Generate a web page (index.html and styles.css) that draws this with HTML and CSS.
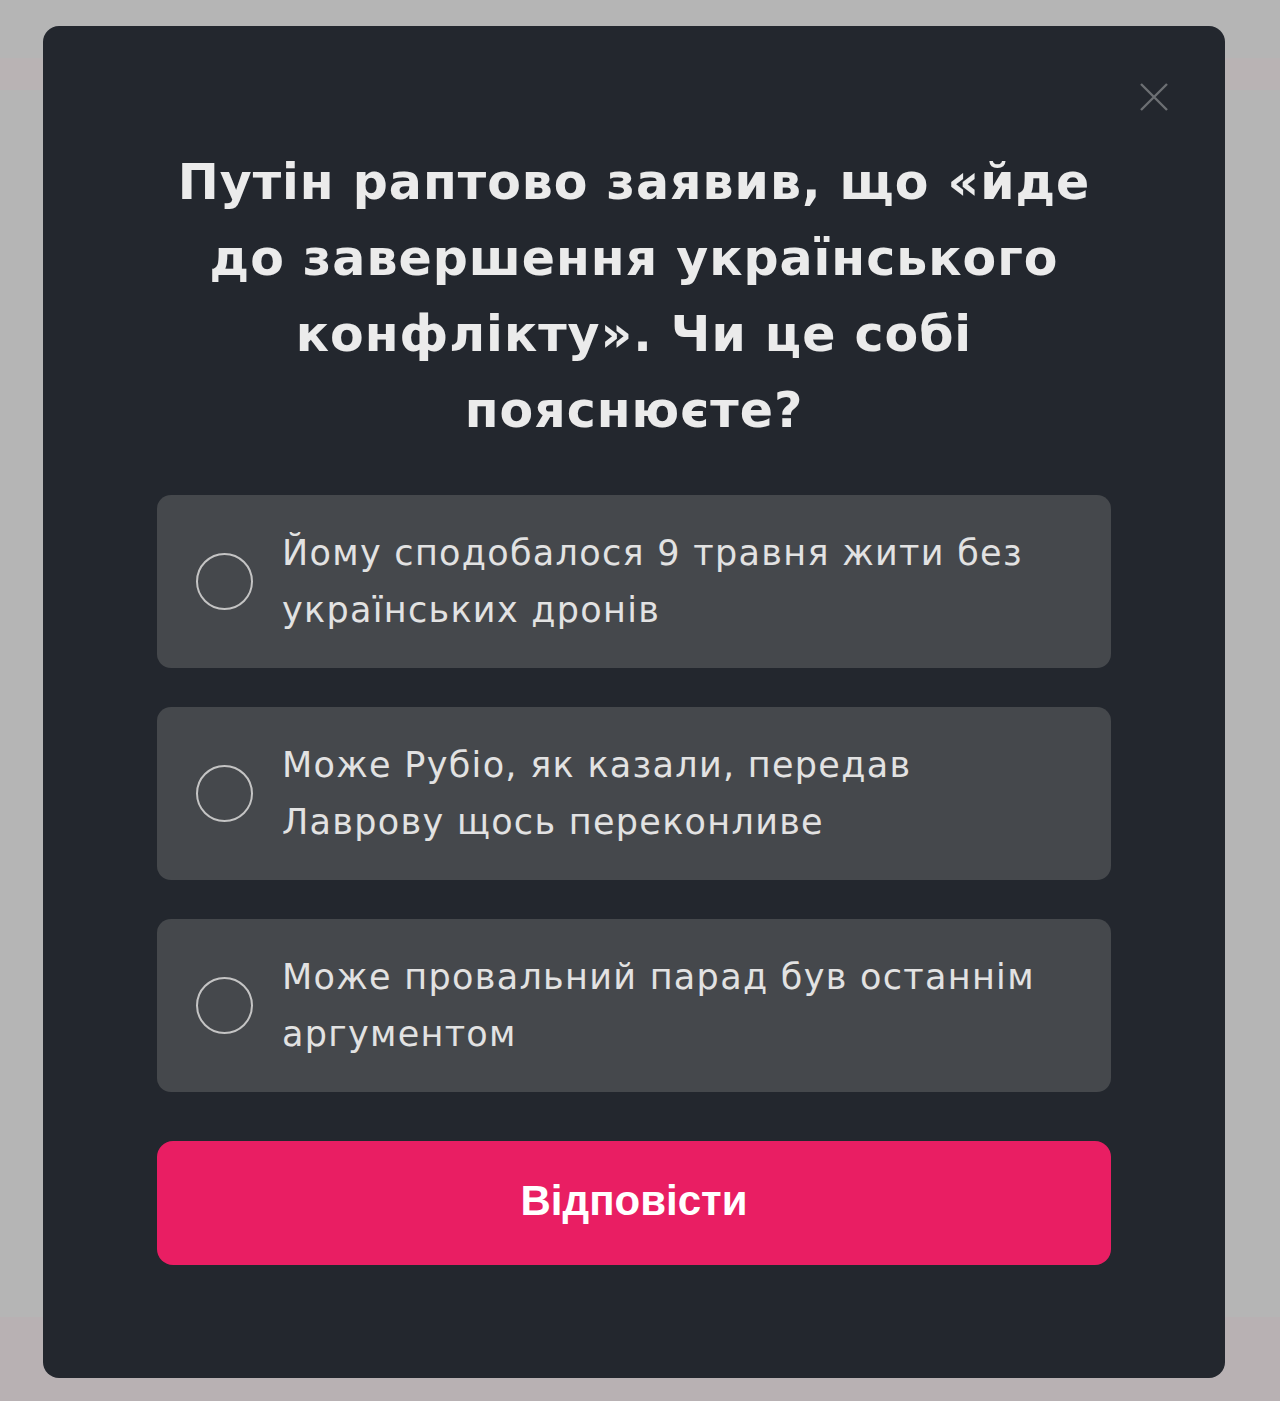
FILE: index.html
```html
<!DOCTYPE html>
<html lang="uk">
<head>
<meta charset="utf-8">
<link rel="stylesheet" href="styles.css">
</head>
<body>
<div class="backdrop">
  <div class="strip-top"></div>
  <div class="strip-bottom"></div>
  <div class="modal">
    <button class="close" aria-label="Закрити">
      <svg width="30" height="30" viewBox="0 0 30 30"><path d="M2 2 L28 28 M28 2 L2 28" stroke="#6c6f73" stroke-width="2.4" fill="none"/></svg>
    </button>
    <h2 class="title">Путін раптово заявив, що «йде до завершення українського конфлікту». Чи це собі пояснюєте?</h2>
    <div class="options">
      <label class="option"><span class="radio"></span><span class="text">Йому сподобалося 9 травня жити без українських дронів</span></label>
      <label class="option"><span class="radio"></span><span class="text">Може Рубіо, як казали, передав Лаврову щось переконливе</span></label>
      <label class="option"><span class="radio"></span><span class="text">Може провальний парад був останнім аргументом</span></label>
    </div>
    <button class="submit">Відповісти</button>
  </div>
</div>
</body>
</html>
```
FILE: styles.css
```css
html, body {
  margin: 0;
  padding: 0;
}
body {
  background: #b5b5b5;
  width: 1280px;
  height: 1401px;
  overflow: hidden;
}
.backdrop {
  position: relative;
  width: 1280px;
  height: 1401px;
  padding-top: 26px;
  box-sizing: border-box;
}
.strip-top {
  position: absolute;
  left: 0;
  right: 0;
  top: 58px;
  height: 32px;
  background: #b9b3b4;
}
.strip-bottom {
  position: absolute;
  left: 0;
  right: 0;
  top: 1317px;
  bottom: 0;
  background: #b8b1b3;
}
.modal {
  position: relative;
  margin-left: 43px;
  width: 1182px;
  height: 1352px;
  box-sizing: border-box;
  background: #23272e;
  border-radius: 16px;
  padding: 119px 114px 0;
  display: flex;
  flex-direction: column;
}
.close {
  position: absolute;
  top: 56px;
  right: 56px;
  width: 30px;
  height: 30px;
  padding: 0;
  border: 0;
  background: none;
}
.close svg { display: block; }
.title {
  margin: 0 auto;
  width: 930px;
  text-align: center;
  color: #ebebeb;
  font-family: "DejaVu Sans", sans-serif;
  font-weight: 700;
  font-size: 49px;
  line-height: 76px;
  letter-spacing: 1px;
}
.options {
  margin-top: 46px;
  display: flex;
  flex-direction: column;
  gap: 39px;
}
.option {
  display: flex;
  align-items: center;
  height: 173px;
  box-sizing: border-box;
  padding: 0 40px 0 39px;
  background: #45484c;
  border-radius: 14px;
}
.radio {
  flex: none;
  width: 57px;
  height: 57px;
  box-sizing: border-box;
  border: 2px solid #c4c4c4;
  border-radius: 50%;
  margin-right: 29px;
}
.text {
  color: #e2e2e2;
  font-family: "DejaVu Sans", sans-serif;
  font-size: 35px;
  line-height: 57px;
  letter-spacing: 1.3px;
}
.submit {
  margin-top: 49px;
  height: 124px;
  border: 0;
  border-radius: 16px;
  background: #e91e63;
  color: #ffffff;
  font-family: "Liberation Sans", Arial, sans-serif;
  font-weight: 700;
  font-size: 42px;
  padding: 0 0 4px;
}
```
